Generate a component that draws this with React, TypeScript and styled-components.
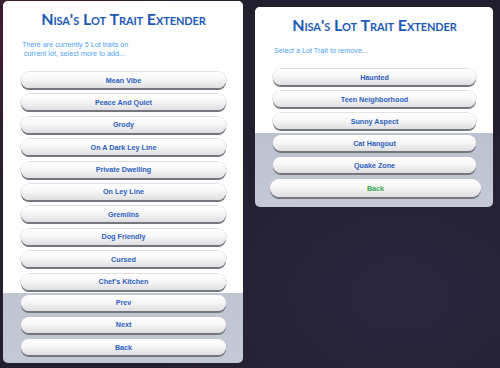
import React from "react";
import styled, { createGlobalStyle } from "styled-components";

const Global = createGlobalStyle`
  html, body { margin: 0; padding: 0; width: 500px; height: 368px; overflow: hidden; background: #221f2f; }
  #root { width: 500px; height: 368px; }
`;

const Stage = styled.div`
  width: 500px;
  height: 368px;
  box-sizing: border-box;
  padding: 1px 0 0 3px;
  display: flex;
  align-items: flex-start;
  gap: 12px;
  background:
    radial-gradient(ellipse at 0% 10%, rgba(90, 30, 50, 0.55), rgba(0, 0, 0, 0) 35%),
    radial-gradient(ellipse at 80% 80%, rgba(50, 45, 80, 0.5), rgba(0, 0, 0, 0) 50%),
    #221f2f;
`;

const Panel = styled.div<{ $w: number; $h: number; $top: number }>`
  width: ${(p) => p.$w}px;
  height: ${(p) => p.$h}px;
  margin-top: ${(p) => p.$top}px;
  border-radius: 5px;
  overflow: hidden;
  background: linear-gradient(to bottom, #adb4c7, #c4c9d5);
  display: flex;
  flex-direction: column;
`;

const Upper = styled.div<{ $pb: number }>`
  background: #ffffff;
  padding: 8px 17px ${(p) => p.$pb}px 18px;
  display: flex;
  flex-direction: column;
`;

const Lower = styled.div`
  padding: 2px 17px 0 18px;
  display: flex;
  flex-direction: column;
  flex: 1;
`;

const Title = styled.div`
  font-family: Lato, "Liberation Sans", sans-serif;
  font-variant: small-caps;
  font-weight: 700;
  font-size: 16px;
  letter-spacing: -0.1px;
  line-height: 20px;
  height: 20px;
  color: #1d5ab8;
  text-align: center;
  white-space: nowrap;
`;

const Desc = styled.div`
  margin: 11px 0 14px 1px;
  font-family: "Liberation Sans", Arial, sans-serif;
  font-size: 7.2px;
  line-height: 9px;
  color: #4e9ff2;
  white-space: pre;
`;

const List = styled.div<{ $gap: number }>`
  display: flex;
  flex-direction: column;
  gap: ${(p) => p.$gap}px;
`;

const Button = styled.div<{ $primary?: boolean }>`
  height: ${(p) => (p.$primary ? 18 : 16)}px;
  margin: ${(p) => (p.$primary ? "0 -5px 0 -3px" : "0")};
  border-radius: 9px;
  background: linear-gradient(to bottom, #ffffff 0%, #f7f7f7 45%, #dfdfe2 100%);
  box-shadow: 0 2px 0 #76777e, 0 0 0 0.6px #c4c4c8;
  display: flex;
  align-items: center;
  justify-content: center;
  font-family: "Liberation Sans", Arial, sans-serif;
  font-weight: 700;
  font-size: 7.2px;
  color: ${(p) => (p.$primary ? "#3ba64b" : "#2d60bf")};
  white-space: nowrap;
`;

const leftUpper = [
  "Mean Vibe",
  "Peace And Quiet",
  "Grody",
  "On A Dark Ley Line",
  "Private Dwelling",
  "On Ley Line",
  "Gremlins",
  "Dog Friendly",
  "Cursed",
  "Chef's Kitchen",
];

export default function App() {
  return (
    <>
      <Global />
      <Stage>
        <Panel $w={240} $h={362} $top={0}>
          <Upper $pb={3}>
            <Title>Nisa's Lot Trait Extender</Title>
            <Desc>{"There are currently 5 Lot traits on\n current lot, select more to add..."}</Desc>
            <List $gap={6.4}>
              {leftUpper.map((t) => (
                <Button key={t}>{t}</Button>
              ))}
            </List>
          </Upper>
          <Lower>
            <List $gap={6.4}>
              <Button>Prev</Button>
              <Button>Next</Button>
              <Button>Back</Button>
            </List>
          </Lower>
        </Panel>
        <Panel $w={238} $h={200} $top={6}>
          <Upper $pb={4}>
            <Title>Nisa's Lot Trait Extender</Title>
            <Desc>Select a Lot Trait to remove...</Desc>
            <List $gap={6}>
              <Button>Haunted</Button>
              <Button>Teen Neighborhood</Button>
              <Button>Sunny Aspect</Button>
            </List>
          </Upper>
          <Lower>
            <List $gap={6}>
              <Button>Cat Hangout</Button>
              <Button>Quake Zone</Button>
              <Button $primary>Back</Button>
            </List>
          </Lower>
        </Panel>
      </Stage>
    </>
  );
}
